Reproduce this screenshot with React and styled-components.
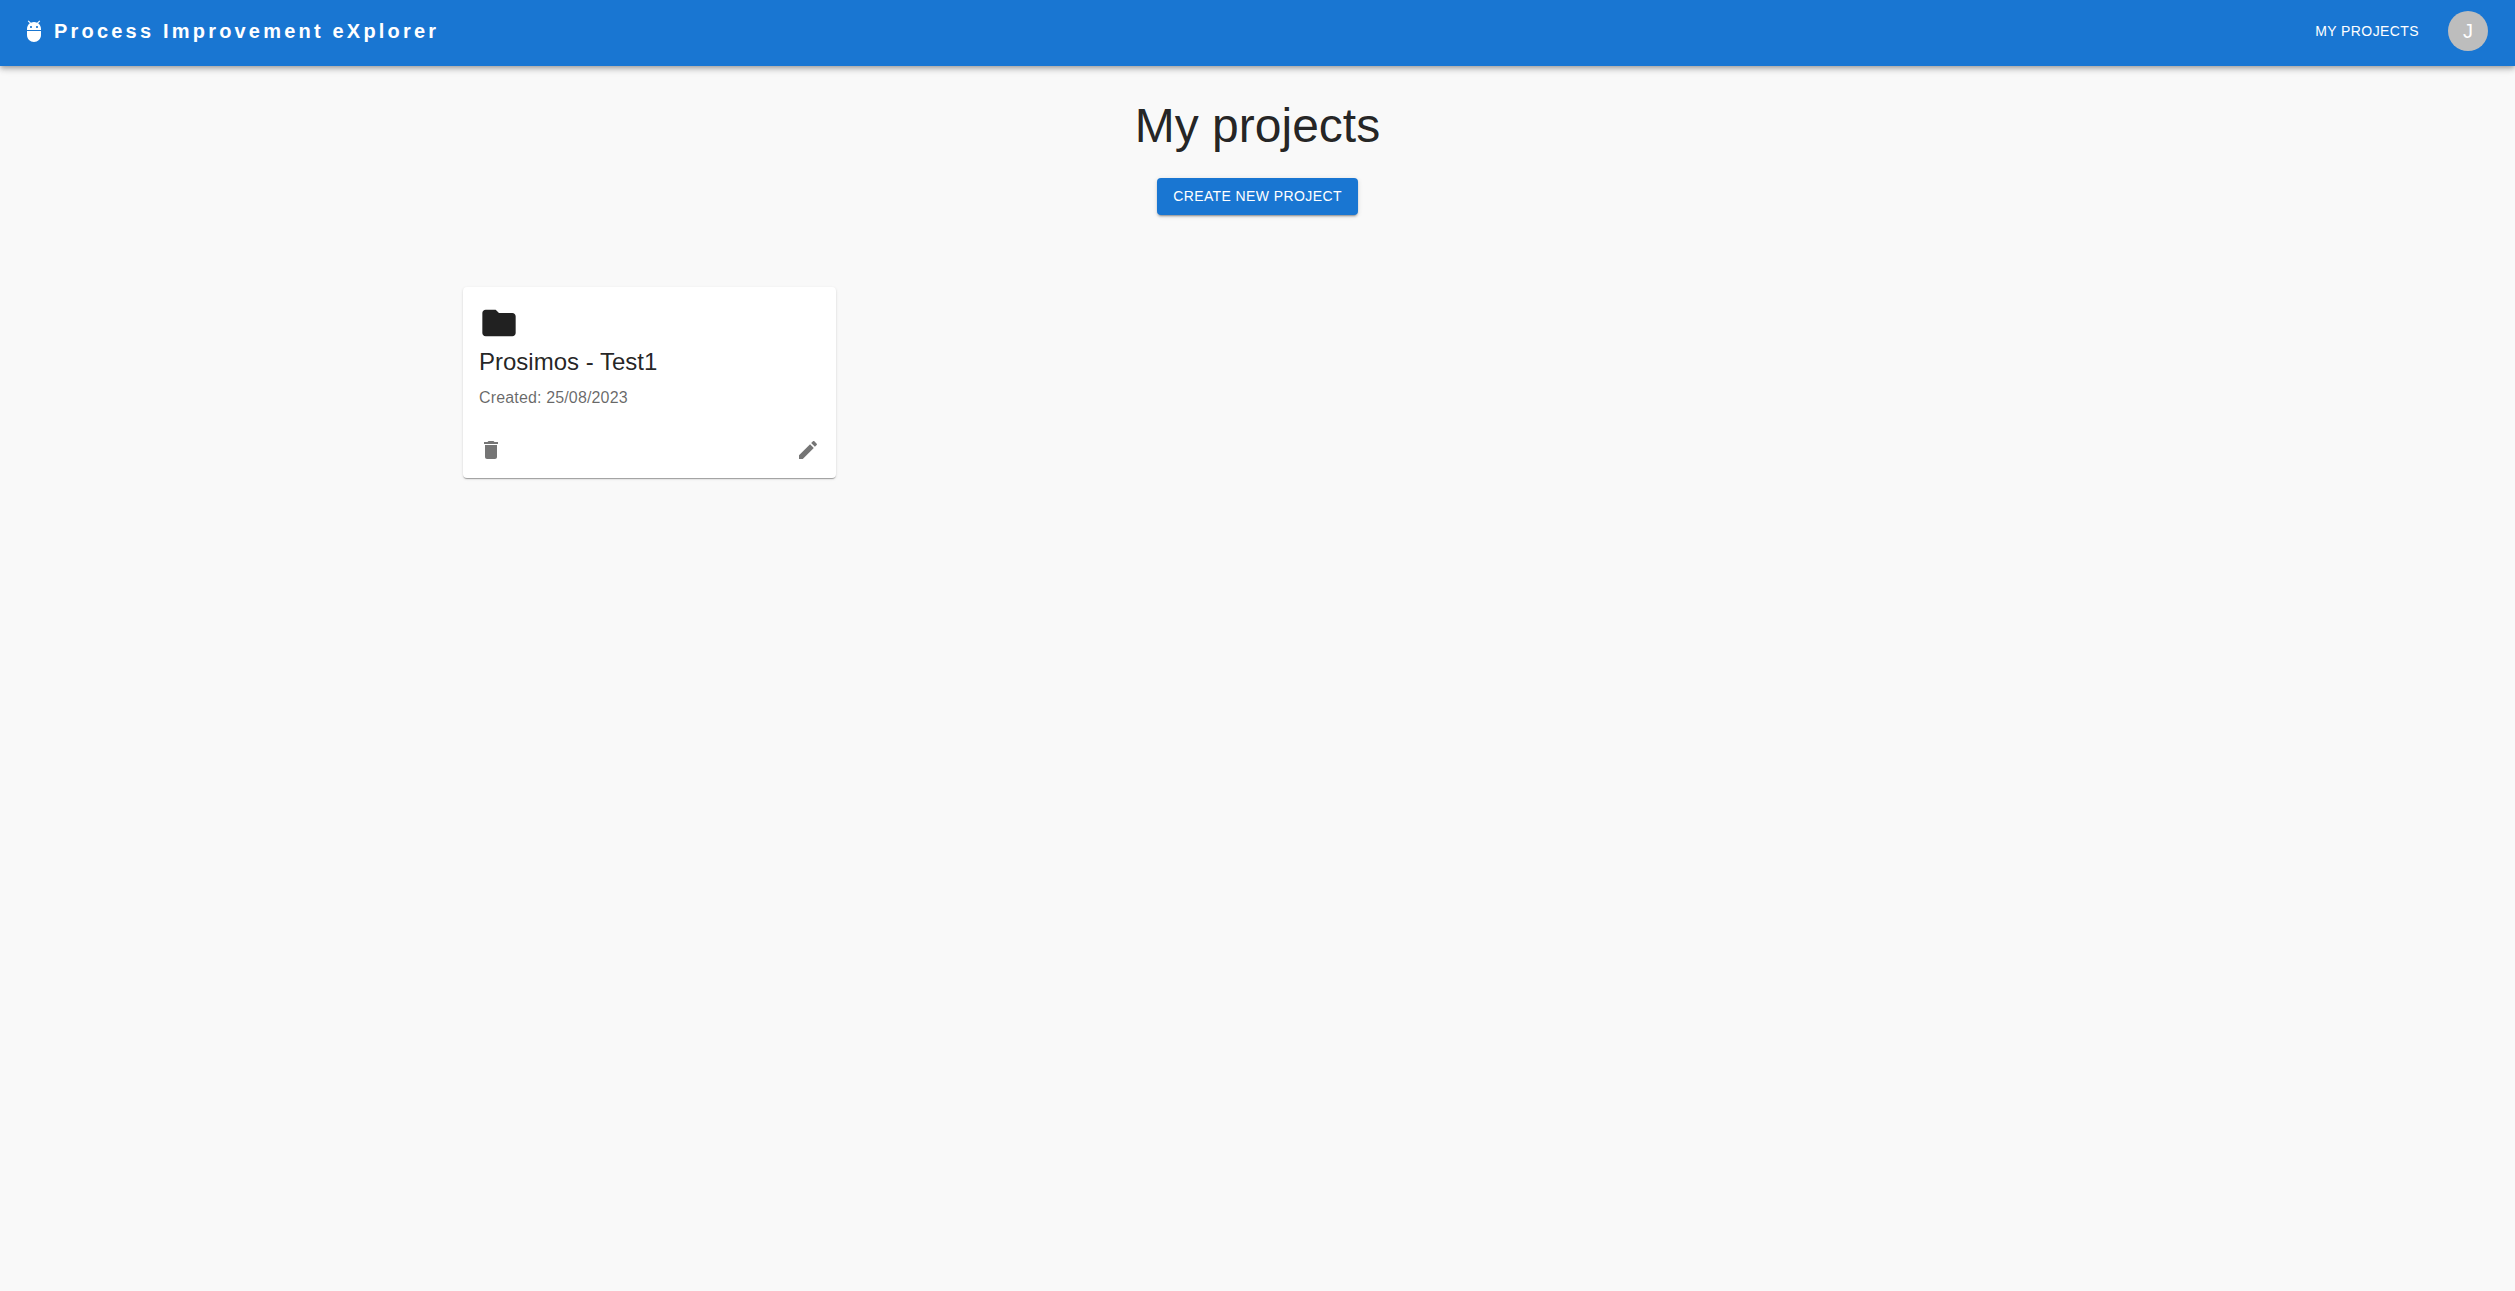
import React from "react";
import styled, { createGlobalStyle } from "styled-components";

const GlobalStyle = createGlobalStyle`
  *, *::before, *::after { box-sizing: border-box; }
  body {
    margin: 0;
    background: #f9f9f9;
    color: rgba(0, 0, 0, 0.87);
    font-family: "Liberation Sans", Arial, sans-serif;
    font-size: 16px;
    line-height: 24px;
  }
`;

const AppBar = styled.header`
  display: flex;
  align-items: center;
  justify-content: space-between;
  padding: 11px 27px 15px 22px;
  background: #1976d2;
  color: #fff;
  box-shadow: 0 2px 4px -1px rgba(0, 0, 0, 0.2), 0 4px 5px 0 rgba(0, 0, 0, 0.14),
    0 1px 10px 0 rgba(0, 0, 0, 0.12);
`;

const Brand = styled.a`
  display: flex;
  align-items: center;
  gap: 8px;
  color: inherit;
  font-size: 20px;
  font-weight: 700;
  line-height: 32px;
  letter-spacing: 0.2rem;
  text-decoration: none;
`;

const Nav = styled.nav`
  display: flex;
  align-items: center;
  gap: 21px;
`;

const NavLink = styled.a`
  padding: 6px 8px;
  color: inherit;
  font-size: 14px;
  letter-spacing: 0.02857em;
  text-decoration: none;
  text-transform: uppercase;
`;

const Avatar = styled.button`
  display: flex;
  align-items: center;
  justify-content: center;
  width: 40px;
  height: 40px;
  padding: 0;
  border: 0;
  border-radius: 50%;
  background: #bdbdbd;
  color: #fff;
  font: inherit;
  font-size: 20px;
  line-height: 20px;
  cursor: pointer;
`;

const Main = styled.main`
  display: flex;
  flex-direction: column;
  align-items: center;
  padding: 32px 24px;
`;

const Heading = styled.h1`
  margin: 0 0 24px;
  font-size: 48px;
  font-weight: 400;
  line-height: 56px;
`;

const PrimaryButton = styled.button`
  padding: 6px 16px;
  border: 0;
  border-radius: 4px;
  background: #1976d2;
  color: #fff;
  font: inherit;
  font-size: 14px;
  line-height: 25px;
  letter-spacing: 0.02857em;
  text-transform: uppercase;
  box-shadow: 0 3px 1px -2px rgba(0, 0, 0, 0.2), 0 2px 2px 0 rgba(0, 0, 0, 0.14),
    0 1px 5px 0 rgba(0, 0, 0, 0.12);
  cursor: pointer;
`;

const ProjectGrid = styled.section`
  display: grid;
  grid-template-columns: repeat(4, 1fr);
  gap: 32px;
  width: 100%;
  max-width: 1589px;
  margin-top: 72px;
`;

const Card = styled.article`
  display: flex;
  flex-direction: column;
  padding: 16px;
  border-radius: 4px;
  background: #fff;
  box-shadow: 0 2px 1px -1px rgba(0, 0, 0, 0.2), 0 1px 1px 0 rgba(0, 0, 0, 0.14),
    0 1px 3px 0 rgba(0, 0, 0, 0.12);
`;

const CardTitle = styled.h2`
  margin: 3px 0 8px;
  font-size: 24px;
  font-weight: 400;
  line-height: 32px;
`;

const CardMeta = styled.p`
  margin: 0;
  color: rgba(0, 0, 0, 0.6);
  letter-spacing: 0.00938em;
`;

const CardActions = styled.div`
  display: flex;
  justify-content: space-between;
  margin-top: 28px;
`;

const IconButton = styled.button`
  display: flex;
  padding: 0;
  border: 0;
  background: none;
  color: rgba(0, 0, 0, 0.54);
  cursor: pointer;
`;

const Svg = styled.svg`
  display: block;
  flex: none;
  width: ${(p) => p.$size}px;
  height: ${(p) => p.$size}px;
  fill: currentColor;
`;

const paths = {
  android:
    "M5 16c0 3.87 3.13 7 7 7s7-3.13 7-7v-4H5v4zM16.12 4.37l2.1-2.1-.82-.83-2.3 2.31C14.16 3.28 13.12 3 12 3s-2.16.28-3.09.75L6.6 1.44l-.82.83 2.1 2.1C6.14 5.64 5 7.68 5 10v1h14v-1c0-2.32-1.14-4.36-2.88-5.63zM9 9c-.55 0-1-.45-1-1s.45-1 1-1 1 .45 1 1-.45 1-1 1zm6 0c-.55 0-1-.45-1-1s.45-1 1-1 1 .45 1 1-.45 1-1 1z",
  folder:
    "M10 4H4c-1.1 0-1.99.9-1.99 2L2 18c0 1.1.9 2 2 2h16c1.1 0 2-.9 2-2V8c0-1.1-.9-2-2-2h-8l-2-2z",
  trash: "M6 19c0 1.1.9 2 2 2h8c1.1 0 2-.9 2-2V7H6v12zM19 4h-3.5l-1-1h-5l-1 1H5v2h14V4z",
  pencil:
    "M3 17.25V21h3.75L17.81 9.94l-3.75-3.75L3 17.25zM20.71 7.04c.39-.39.39-1.02 0-1.41l-2.34-2.34c-.39-.39-1.02-.39-1.41 0l-1.83 1.83 3.75 3.75 1.83-1.83z",
};

const Icon = ({ name, size = 24 }) => (
  <Svg $size={size} viewBox="0 0 24 24" aria-hidden="true">
    <path d={paths[name]} />
  </Svg>
);

const projects = [{ name: "Prosimos - Test1", created: "25/08/2023" }];

export default function App() {
  return (
    <>
      <GlobalStyle />
      <AppBar>
        <Brand href="#">
          <Icon name="android" />
          Process Improvement eXplorer
        </Brand>
        <Nav>
          <NavLink href="#projects">My projects</NavLink>
          <Avatar type="button">J</Avatar>
        </Nav>
      </AppBar>
      <Main id="projects">
        <Heading>My projects</Heading>
        <PrimaryButton type="button">Create new project</PrimaryButton>
        <ProjectGrid>
          {projects.map((project) => (
            <Card key={project.name}>
              <Icon name="folder" size={40} />
              <CardTitle>{project.name}</CardTitle>
              <CardMeta>Created: {project.created}</CardMeta>
              <CardActions>
                <IconButton type="button" aria-label="Delete project">
                  <Icon name="trash" />
                </IconButton>
                <IconButton type="button" aria-label="Edit project">
                  <Icon name="pencil" />
                </IconButton>
              </CardActions>
            </Card>
          ))}
        </ProjectGrid>
      </Main>
    </>
  );
}
